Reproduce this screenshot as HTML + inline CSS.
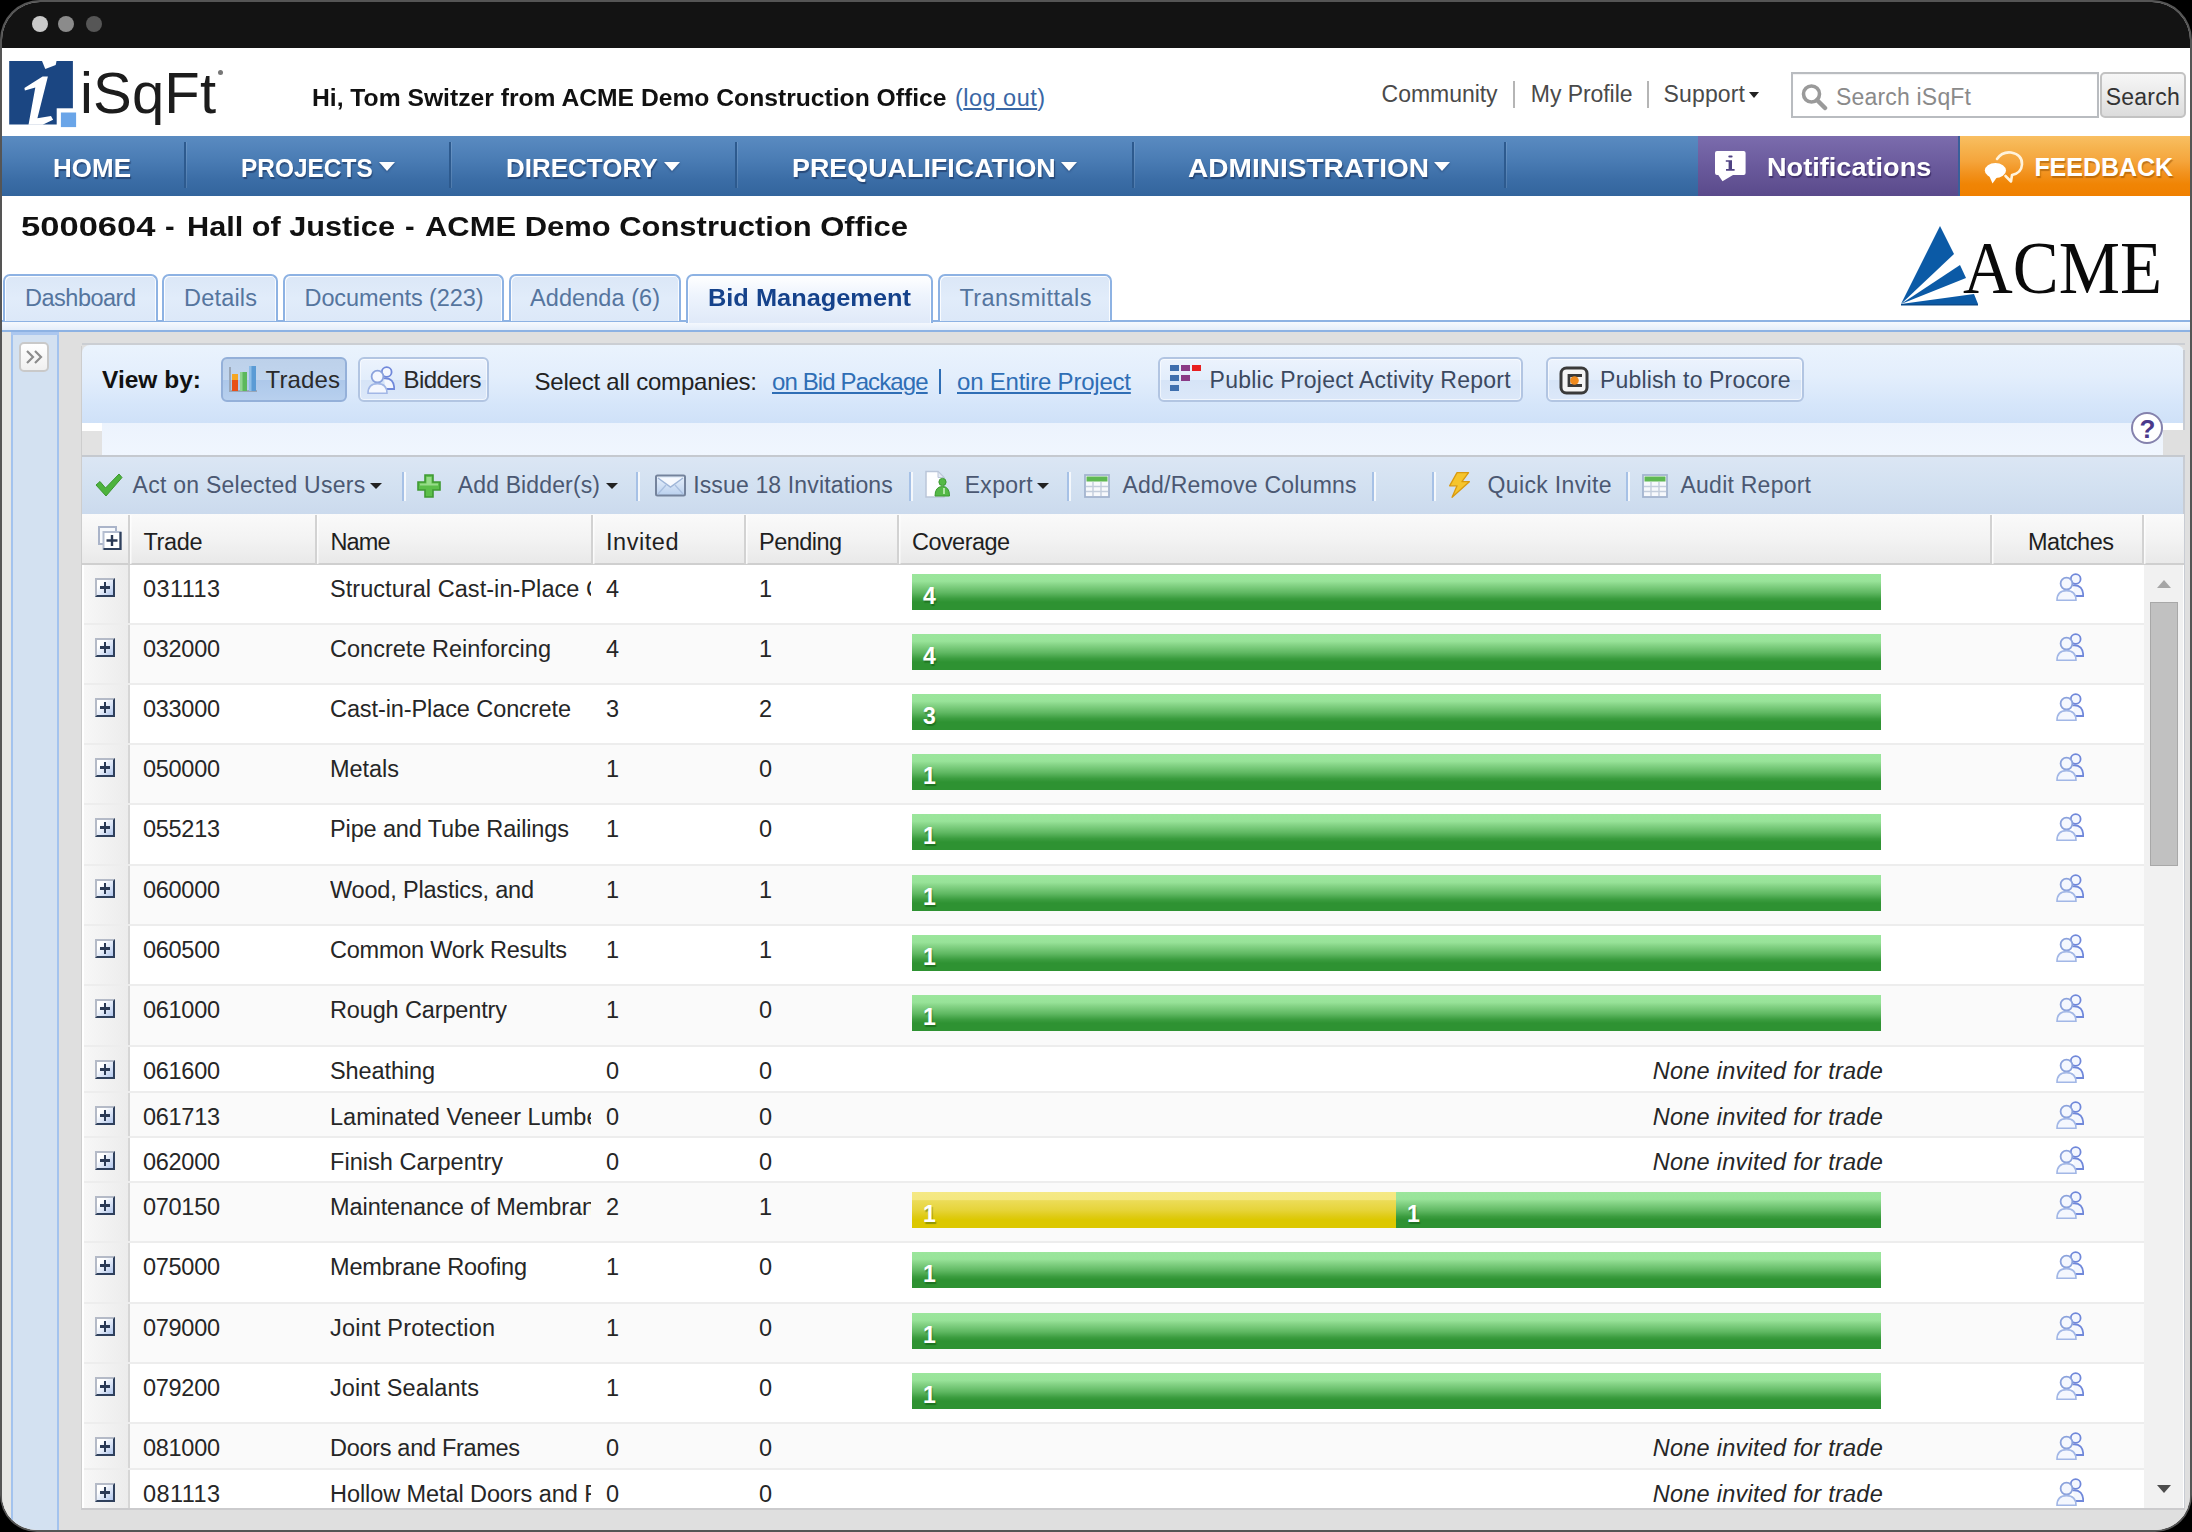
<!DOCTYPE html>
<html><head><meta charset="utf-8"><title>iSqFt - Bid Management</title>
<style>
*{box-sizing:border-box;margin:0;padding:0}
html,body{width:2192px;height:1532px;overflow:hidden;background:#000;font-family:"Liberation Sans",sans-serif}
#win{position:absolute;left:0;top:0;width:2192px;height:1532px;border-radius:40px 40px 37px 37px;background:#555;overflow:hidden}
#in{position:absolute;left:2px;top:2px;width:2188px;height:1528px;border-radius:38px 38px 35px 35px;background:#fff;overflow:hidden}
#pg{position:absolute;left:-2px;top:-2px;width:2192px;height:1532px}
.a{position:absolute}
.t{position:absolute;white-space:nowrap}
.dot{position:absolute;width:16px;height:16px;border-radius:50%;top:16px}
.nsep{position:absolute;top:142px;width:2px;height:46px;background:#2d5a8e;box-shadow:1px 0 0 rgba(255,255,255,.12)}
.tab{position:absolute;top:274px;height:47px;border:2px solid #8db2e3;border-bottom:none;border-radius:7px 7px 0 0;background:linear-gradient(#dbe7f7,#e1ecfa 50%,#dce8f8);box-shadow:inset 1px 1px 0 rgba(255,255,255,.85),inset -1px 0 0 rgba(255,255,255,.85)}
.tab.act{background:linear-gradient(#ffffff,#eef4fd 40%,#dfe9f8);height:49px}
.btn{position:absolute;top:357px;height:45px;border:2px solid #b2c5e2;border-radius:6px;background:linear-gradient(#ecf3fd,#e2edfb 50%,#d6e4f7 52%,#dce8f9);box-shadow:inset 0 0 0 1px rgba(255,255,255,.6)}
.btn.on{border-color:#94b0d9;background:linear-gradient(#bdd1ea,#c1d5ee 50%,#adc8ea 52%,#b8d0ee);box-shadow:none}
.tsep{position:absolute;top:472px;width:2px;height:29px;background:#a6c1e6;box-shadow:2px 0 0 rgba(255,255,255,.75)}
.hsep{position:absolute;top:515px;width:2px;height:49px;background:#d2d2d2;box-shadow:1.5px 0 0 rgba(255,255,255,.75)}
.row{position:absolute;left:84px;width:2060px;border-bottom:2px solid #ededed;background:#fff}
.row.alt{background:#fafafa}
.exp{position:absolute;left:0;top:0;bottom:0;width:46px;background:linear-gradient(90deg,#f7f7f7,#ececec);border-right:2px solid #d6d6d6}
.plus{position:absolute;left:11px;top:13px;width:20px;height:19px;border:2px solid;border-color:#b4bac7 #2f405c #2f405c #b4bac7;background:linear-gradient(135deg,#fff 25%,#b3c8ed)}
.plus:before{content:"";position:absolute;left:3px;top:6.3px;width:10px;height:2.4px;background:#2b3a55}
.plus:after{content:"";position:absolute;left:6.8px;top:2px;width:2.4px;height:11px;background:#2b3a55}
.bar{position:absolute;top:9px;height:36px;background:linear-gradient(#9be69c 0%,#98e399 20%,#86d487 30%,#5fb862 52%,#3c9d40 68%,#2e9232 78%,#2e9232 100%)}
.bar.y{background:linear-gradient(#f5e985 0%,#f4e77f 21%,#ecdc58 24%,#e6d43a 50%,#dfcb14 68%,#dcc800 78%,#dcc800 100%)}
.arr{position:absolute;width:0;height:0;border-left:6px solid transparent;border-right:6px solid transparent;border-top:6px solid #222}
</style></head><body>
<div id="win"><div id="in"><div id="pg">
<div class="a" style="left:0;top:0;width:2192px;height:48px;background:#131313"></div>
<div class="dot" style="left:32px;background:#c9c9c9"></div><div class="dot" style="left:58px;background:#8b8b8b"></div><div class="dot" style="left:86px;background:#565656"></div>
<svg class="a" style="left:8px;top:58px" width="72" height="72" viewBox="0 0 72 72">
<rect x="1.2" y="3" width="63.7" height="63.5" fill="#1b4682"/>
<path d="M33.6 2 L48.7 2 L47.7 7 L37.3 11.1 Z" fill="#fff"/>
<path d="M34.6 18.5 L39.9 18.5 L29.4 60.2 L43 58.1 L45.1 61.8 L34.6 66.8 L20.5 66.8 L27.3 29.4 L16.9 32.5 L16.4 30 Z" fill="#fff"/>
<rect x="48.7" y="50.3" width="21" height="20" fill="#fff"/>
<rect x="52.9" y="54.5" width="15.2" height="14.6" fill="#6aa5e8"/>
</svg>
<div class="a" style="left:218px;top:70px;width:5px;height:5px;border-radius:50%;background:#777"></div>
<div class="a" style="left:1513px;top:81px;width:2px;height:27px;background:#b5b5b5"></div>
<div class="a" style="left:1647px;top:81px;width:2px;height:27px;background:#b5b5b5"></div>
<div class="arr" style="left:1749px;top:92px;border-left-width:5.5px;border-right-width:5.5px;border-top-width:6px"></div>
<div class="a" style="left:1791px;top:72px;width:308px;height:46px;border:2px solid #b9bcc0;background:#fff;box-shadow:inset 0 1px 1px rgba(0,0,0,.06)"></div>
<svg class="a" style="left:1800px;top:83px" width="28" height="28" viewBox="0 0 28 28"><circle cx="11.5" cy="11" r="8" fill="none" stroke="#9a9a9a" stroke-width="3.6"/><path d="M17 17 L25 25" stroke="#9a9a9a" stroke-width="4.5" stroke-linecap="round"/></svg>
<div class="a" style="left:2100px;top:72px;width:86px;height:46px;border:2px solid #c2c2c2;border-radius:5px;background:linear-gradient(#f6f6f6,#eaeaea 50%,#dcdcdc)"></div>
<div class="a" style="left:0;top:136px;width:2192px;height:60px;background:linear-gradient(#5a8bc1 0%,#4a7cb4 40%,#3a6ca5 75%,#33659d 100%)"></div>
<div class="nsep" style="left:184px"></div>
<div class="nsep" style="left:449px"></div>
<div class="nsep" style="left:735px"></div>
<div class="nsep" style="left:1132px"></div>
<div class="nsep" style="left:1504px"></div>
<div class="arr" style="left:379px;top:162px;border-left-width:8.5px;border-right-width:8.5px;border-top:9px solid #fff;filter:drop-shadow(0 1px 1px rgba(20,40,80,.5))"></div>
<div class="arr" style="left:664px;top:162px;border-left-width:8.5px;border-right-width:8.5px;border-top:9px solid #fff;filter:drop-shadow(0 1px 1px rgba(20,40,80,.5))"></div>
<div class="arr" style="left:1060.5px;top:162px;border-left-width:8.5px;border-right-width:8.5px;border-top:9px solid #fff;filter:drop-shadow(0 1px 1px rgba(20,40,80,.5))"></div>
<div class="arr" style="left:1433.5px;top:162px;border-left-width:8.5px;border-right-width:8.5px;border-top:9px solid #fff;filter:drop-shadow(0 1px 1px rgba(20,40,80,.5))"></div>
<div class="a" style="left:1698px;top:136px;width:262px;height:60px;background:linear-gradient(#7b6cad,#6a5a9c 50%,#5a4a8b)"></div>
<svg class="a" style="left:1714px;top:149px" width="34" height="34" viewBox="0 0 34 34"><path d="M3 2 H29.6 Q31.6 2 31.6 4 V24 Q31.6 26 29.6 26 H19 L8.5 32.3 L4.3 26 H3 Q1 26 1 24 V4 Q1 2 3 2 Z" fill="#fff"/><rect x="14.3" y="6.4" width="4.3" height="2.2" rx="1" fill="#4f4283"/><path d="M11.8 11.3 H18 V19.9 H20.6 V21.7 H12 V19.9 H14.6 V12.8 H11.8 Z" fill="#4f4283"/></svg>
<div class="a" style="left:1960px;top:136px;width:232px;height:60px;background:linear-gradient(#f9bf62 0%,#f6b450 18%,#f5a53c 42%,#f2921e 62%,#f08505 80%,#f08000 100%)"></div>
<div class="a" style="left:1958px;top:136px;width:2px;height:60px;background:#3a5f9a"></div>
<svg class="a" style="left:1983px;top:149px" width="44" height="38" viewBox="0 0 44 38"><path d="M14 10 Q19 2.5 28 3.5 Q39.5 5.5 39 15.5 Q38.5 24 29 26 L28 32.5 L22.5 27" fill="none" stroke="#fff3dc" stroke-width="2.6" stroke-linejoin="round" stroke-linecap="round"/><ellipse cx="12.4" cy="21.5" rx="10.6" ry="7.6" fill="#fff"/><path d="M6 26.5 L9.5 34.5 L14.5 27.5 Z" fill="#fff"/></svg>
<svg class="a" style="left:1896px;top:222px" width="90" height="88" viewBox="0 0 90 88">
<path d="M5 82 L44 4 L58 32 Z" fill="#0b5aa6"/>
<path d="M5 82 L64 43 L70 56 Z" fill="#0b5aa6"/>
<path d="M5 82 L78 72 L82 82 L5 83 Z" fill="#0b5aa6"/>
<path d="M5 82 L82 82 L82 83.5 L5 83.5Z" fill="#0b4a8a"/>
</svg>
<div class="a" style="left:0;top:320px;width:2192px;height:2px;background:#8db2e3"></div>
<div class="a" style="left:0;top:322px;width:2192px;height:8px;background:linear-gradient(#f6f9fe,#e4edfa)"></div>
<div class="a" style="left:0;top:330px;width:2192px;height:2px;background:#8db2e3"></div>
<div class="tab" style="left:3px;width:155px"></div>
<div class="tab" style="left:162px;width:116px"></div>
<div class="tab" style="left:283px;width:221px"></div>
<div class="tab" style="left:509px;width:172px"></div>
<div class="tab act" style="left:686px;width:247px"></div>
<div class="tab" style="left:938px;width:174px"></div>
<div class="a" style="left:0;top:332px;width:2192px;height:1200px;background:#dfdfdf"></div>
<div class="a" style="left:11px;top:332px;width:48px;height:1200px;background:#d3e1f1;border-left:2px solid #a3c3ee;border-right:2px solid #a3c3ee"></div>
<div class="a" style="left:2px;top:332px;width:9px;height:1200px;background:#e6e6e4"></div>
<div class="a" style="left:11px;top:332px;width:48px;height:3px;background:#abc7ef"></div>
<div class="a" style="left:19px;top:342px;width:30px;height:30px;border:2px solid #c9c9c9;border-radius:5px;background:linear-gradient(#ffffff,#f0f0f0)"></div>
<svg class="a" style="left:24px;top:348px" width="22" height="18" viewBox="0 0 22 18"><path d="M3 3 L9 9 L3 15 M11 3 L17 9 L11 15" fill="none" stroke="#8c8c8c" stroke-width="2.2"/></svg>
<div class="a" style="left:82px;top:343px;width:2103px;height:2px;background:#cbced3"></div>
<div class="a" style="left:82px;top:345px;width:2102px;height:78px;border-radius:8px 8px 0 0;background:linear-gradient(#eaf3fd 0%,#e3eefc 40%,#d6e6fa 75%,#cfe1f8 100%)"></div>
<div class="a" style="left:82px;top:423px;width:2102px;height:33px;background:linear-gradient(#ecf3fd,#f0f6fe)"></div>
<div class="a" style="left:82px;top:423px;width:20px;height:8px;background:#fff"></div><div class="a" style="left:82px;top:431px;width:20px;height:25px;background:#e2e2e2"></div>
<div class="a" style="left:2163px;top:423px;width:21px;height:7px;background:#fff"></div><div class="a" style="left:2163px;top:430px;width:22px;height:26px;background:#dfdfdf"></div>
<div class="a" style="left:2183px;top:350px;width:2px;height:80px;background:#c8ccd3"></div>
<div class="btn on" style="left:221px;width:126px"></div>
<div class="btn" style="left:358px;width:131px"></div>
<svg class="a" style="left:228px;top:364px" width="30" height="30" viewBox="0 0 30 30"><rect x="1" y="3" width="2" height="25" fill="#9aa7b8"/><rect x="1" y="26" width="28" height="2" fill="#9aa7b8"/><rect x="4" y="15" width="6" height="12" fill="#e8501a"/><rect x="4" y="10" width="6" height="6" fill="#f5a623"/><rect x="12" y="8" width="7" height="19" fill="#5cb85c"/><rect x="21" y="2" width="7" height="25" fill="#5b9bd5"/><rect x="21" y="2" width="2.5" height="25" fill="#8cbde8"/><rect x="12" y="8" width="2.5" height="19" fill="#8fd48f"/></svg>
<svg class="a" style="left:367px;top:366px" width="28" height="28" viewBox="0 0 28 28"><g fill="#f4f7fe"><circle cx="19.7" cy="6" r="4.9" stroke="#7088da" stroke-width="1.8"/><path d="M17 12.3 Q27.2 11.5 27.2 23 H18.5" stroke="#7088da" stroke-width="1.8"/><circle cx="10.5" cy="10.6" r="5.9" stroke="#8ba2dc" stroke-width="1.8"/><path d="M1 27.4 Q1 17.6 10.5 17.6 Q20 17.6 20 27.4 Z" stroke="#a2b7e6" stroke-width="1.6"/></g></svg>
<div class="a" style="left:939px;top:369px;width:2px;height:25px;background:#2f6eb5"></div>
<div class="btn" style="left:1158px;width:365px"></div>
<svg class="a" style="left:1170px;top:364px" width="32" height="30" viewBox="0 0 32 30"><rect x="0" y="1" width="9" height="6" fill="#3f6fae"/><rect x="11" y="1" width="9" height="6" fill="#8a3a86"/><rect x="22" y="1" width="9" height="6" fill="#e82020"/><rect x="0" y="11" width="9" height="6" fill="#3f6fae"/><rect x="11" y="11" width="9" height="6" fill="#8a3a86"/><rect x="0" y="21" width="9" height="6" fill="#3f6fae"/></svg>
<div class="btn" style="left:1546px;width:258px"></div>
<svg class="a" style="left:1559px;top:366px" width="30" height="30" viewBox="0 0 30 30"><rect x="2" y="2" width="26" height="25" rx="5.5" fill="#f4f4f4" stroke="#3a3a3a" stroke-width="3"/><path d="M23 9.5 H10 V19.5 H23" fill="none" stroke="#3a3a3a" stroke-width="2.8"/><circle cx="15.5" cy="14.5" r="4.3" fill="#f08a1c"/></svg>
<div class="a" style="left:2131px;top:412px;width:32px;height:32px;border-radius:50%;border:2px solid #8582ad;background:#fff"></div>
<div class="a" style="left:82px;top:455px;width:2103px;height:2px;background:#c5c9cf"></div>
<div class="a" style="left:82px;top:457px;width:2102px;height:57px;background:linear-gradient(#dbe6f4 0%,#d3e1f1 50%,#cbdaed 100%)"></div>
<div class="a" style="left:2183px;top:457px;width:2px;height:1052px;background:#c8ccd3"></div>
<svg class="a" style="left:94px;top:472px" width="30" height="26" viewBox="0 0 30 26"><path d="M2 13 L6 9.5 L11.5 16 L25 2 L28 5.5 L12 24 Z" fill="#4db33d" stroke="#3c962f" stroke-width="1"/></svg>
<div class="arr" style="left:370px;top:483px"></div>
<div class="tsep" style="left:402px"></div>
<svg class="a" style="left:417px;top:474px" width="24" height="24" viewBox="0 0 24 24"><path d="M8 1 H16 V8 H23 V16 H16 V23 H8 V16 H1 V8 H8 Z" fill="#5cbf4a" stroke="#3f9a33" stroke-width="1.6"/><path d="M9.5 3 H14.5 V9.5 H21 V11.5 H3 V9.5 H9.5Z" fill="#a6e39a" opacity=".8"/></svg>
<div class="arr" style="left:606px;top:483px"></div>
<div class="tsep" style="left:636px"></div>
<svg class="a" style="left:655px;top:474px" width="32" height="24" viewBox="0 0 32 24"><defs><linearGradient id="mg" x1="0" y1="0" x2="0" y2="1"><stop offset="0" stop-color="#eaf2fc"/><stop offset="1" stop-color="#b9d0ee"/></linearGradient></defs><rect x="1" y="1.5" width="29" height="20" rx="1.5" fill="url(#mg)" stroke="#74839c" stroke-width="2"/><path d="M3 4 L15.5 13 L28 4" fill="#f6f9fe" stroke="#9fb6d8" stroke-width="1.5"/><path d="M3 20 L11 11 M28 20 L20 11" fill="none" stroke="#a9bfdf" stroke-width="1.3"/></svg>
<div class="tsep" style="left:909px"></div>
<svg class="a" style="left:923px;top:469px" width="30" height="30" viewBox="0 0 30 30"><path d="M3 2.5 H15 L21 8.5 V28 H3 Z" fill="#fdfeff" stroke="#bac6d9" stroke-width="1.5"/><path d="M15 2.5 V8.5 H21 Z" fill="#e3e9f3" stroke="#bac6d9" stroke-width="1"/><circle cx="19.5" cy="13" r="3.6" fill="#55b947" stroke="#3a9a30" stroke-width="1"/><path d="M12 27 Q12 17.5 19.5 17.5 Q26.5 17.5 26.5 27 Z" fill="#55b947" stroke="#3a9a30" stroke-width="1"/><path d="M21 19 v6" stroke="#c8f0c0" stroke-width="1.6"/></svg>
<div class="arr" style="left:1037px;top:483px"></div>
<div class="tsep" style="left:1067px"></div>
<svg class="a" style="left:1084px;top:474px" width="26" height="24" viewBox="0 0 26 24"><rect x="1" y="1" width="24" height="22" fill="#f7f9fc" stroke="#a3b4cf" stroke-width="1.8"/><rect x="2.5" y="2.5" width="21" height="5" fill="#5fb852"/><path d="M2 12.5 H24 M2 17.5 H24 M9 8 V22 M17 8 V22" stroke="#c3cddc" stroke-width="1.4"/></svg>
<div class="tsep" style="left:1372px"></div>
<div class="tsep" style="left:1432px"></div>
<svg class="a" style="left:1447px;top:471px" width="25" height="28" viewBox="0 0 30 34"><path d="M12 2 L26 2 L18 13 L27 13 L6 32 L12 18 L3 18 Z" fill="#f6c52c" stroke="#d99a10" stroke-width="1.6" stroke-linejoin="round"/></svg>
<div class="tsep" style="left:1626px"></div>
<svg class="a" style="left:1642px;top:474px" width="26" height="24" viewBox="0 0 26 24"><rect x="1" y="1" width="24" height="22" fill="#f7f9fc" stroke="#a3b4cf" stroke-width="1.8"/><rect x="2.5" y="2.5" width="21" height="5" fill="#5fb852"/><path d="M2 12.5 H24 M2 17.5 H24 M9 8 V22 M17 8 V22" stroke="#c3cddc" stroke-width="1.4"/></svg>
<div class="a" style="left:80.5px;top:346px;width:1.5px;height:1163px;background:#cdcdcd"></div>
<div class="a" style="left:82px;top:514px;width:2102px;height:51px;background:linear-gradient(#fafafa 0%,#f3f3f3 50%,#e9e9e9 100%);border-bottom:2px solid #cfcfcf"></div>
<div class="hsep" style="left:128px"></div>
<div class="hsep" style="left:315px"></div>
<div class="hsep" style="left:591px"></div>
<div class="hsep" style="left:744px"></div>
<div class="hsep" style="left:897px"></div>
<div class="hsep" style="left:1990px"></div>
<div class="hsep" style="left:2142px"></div>
<svg class="a" style="left:97px;top:525px" width="26" height="26" viewBox="0 0 26 26"><rect x="2" y="2" width="17" height="17" fill="#f7f9fc" stroke="#aab4c9" stroke-width="2"/><rect x="6.5" y="7" width="17" height="17" fill="#fff"/><rect x="6.5" y="7" width="17" height="17" fill="none" stroke="#b4bdd0" stroke-width="2"/><path d="M23.5 7 V24 H6.5" fill="none" stroke="#2f405c" stroke-width="2.2"/><path d="M9.5 15.5 H20.5 M15 10 V21" stroke="#2b3a55" stroke-width="2.4"/></svg>
<div class="a" style="left:82px;top:565px;width:2102px;height:944px;background:#fff"></div>
<div class="a" style="left:0;top:565px;width:2192px;height:944px;overflow:hidden">
<div class="row" style="top:0px;height:60px"><div class="exp"><div class="plus"></div></div><div class="bar" style="left:828px;width:969px"></div><svg class="a" style="left:1972px;top:8px" width="28" height="28" viewBox="0 0 28 28"><g fill="#f4f7fe"><circle cx="19.7" cy="6" r="4.9" stroke="#7088da" stroke-width="1.8"/><path d="M17 12.3 Q27.2 11.5 27.2 23 H18.5" stroke="#7088da" stroke-width="1.8"/><circle cx="10.5" cy="10.6" r="5.9" stroke="#8ba2dc" stroke-width="1.8"/><path d="M1 27.4 Q1 17.6 10.5 17.6 Q20 17.6 20 27.4 Z" stroke="#a2b7e6" stroke-width="1.6"/></g></svg></div>
<div class="row alt" style="top:60px;height:60px"><div class="exp"><div class="plus"></div></div><div class="bar" style="left:828px;width:969px"></div><svg class="a" style="left:1972px;top:8px" width="28" height="28" viewBox="0 0 28 28"><g fill="#f4f7fe"><circle cx="19.7" cy="6" r="4.9" stroke="#7088da" stroke-width="1.8"/><path d="M17 12.3 Q27.2 11.5 27.2 23 H18.5" stroke="#7088da" stroke-width="1.8"/><circle cx="10.5" cy="10.6" r="5.9" stroke="#8ba2dc" stroke-width="1.8"/><path d="M1 27.4 Q1 17.6 10.5 17.6 Q20 17.6 20 27.4 Z" stroke="#a2b7e6" stroke-width="1.6"/></g></svg></div>
<div class="row" style="top:120px;height:60px"><div class="exp"><div class="plus"></div></div><div class="bar" style="left:828px;width:969px"></div><svg class="a" style="left:1972px;top:8px" width="28" height="28" viewBox="0 0 28 28"><g fill="#f4f7fe"><circle cx="19.7" cy="6" r="4.9" stroke="#7088da" stroke-width="1.8"/><path d="M17 12.3 Q27.2 11.5 27.2 23 H18.5" stroke="#7088da" stroke-width="1.8"/><circle cx="10.5" cy="10.6" r="5.9" stroke="#8ba2dc" stroke-width="1.8"/><path d="M1 27.4 Q1 17.6 10.5 17.6 Q20 17.6 20 27.4 Z" stroke="#a2b7e6" stroke-width="1.6"/></g></svg></div>
<div class="row alt" style="top:180px;height:60px"><div class="exp"><div class="plus"></div></div><div class="bar" style="left:828px;width:969px"></div><svg class="a" style="left:1972px;top:8px" width="28" height="28" viewBox="0 0 28 28"><g fill="#f4f7fe"><circle cx="19.7" cy="6" r="4.9" stroke="#7088da" stroke-width="1.8"/><path d="M17 12.3 Q27.2 11.5 27.2 23 H18.5" stroke="#7088da" stroke-width="1.8"/><circle cx="10.5" cy="10.6" r="5.9" stroke="#8ba2dc" stroke-width="1.8"/><path d="M1 27.4 Q1 17.6 10.5 17.6 Q20 17.6 20 27.4 Z" stroke="#a2b7e6" stroke-width="1.6"/></g></svg></div>
<div class="row" style="top:240px;height:61px"><div class="exp"><div class="plus"></div></div><div class="bar" style="left:828px;width:969px"></div><svg class="a" style="left:1972px;top:8px" width="28" height="28" viewBox="0 0 28 28"><g fill="#f4f7fe"><circle cx="19.7" cy="6" r="4.9" stroke="#7088da" stroke-width="1.8"/><path d="M17 12.3 Q27.2 11.5 27.2 23 H18.5" stroke="#7088da" stroke-width="1.8"/><circle cx="10.5" cy="10.6" r="5.9" stroke="#8ba2dc" stroke-width="1.8"/><path d="M1 27.4 Q1 17.6 10.5 17.6 Q20 17.6 20 27.4 Z" stroke="#a2b7e6" stroke-width="1.6"/></g></svg></div>
<div class="row alt" style="top:301px;height:60px"><div class="exp"><div class="plus"></div></div><div class="bar" style="left:828px;width:969px"></div><svg class="a" style="left:1972px;top:8px" width="28" height="28" viewBox="0 0 28 28"><g fill="#f4f7fe"><circle cx="19.7" cy="6" r="4.9" stroke="#7088da" stroke-width="1.8"/><path d="M17 12.3 Q27.2 11.5 27.2 23 H18.5" stroke="#7088da" stroke-width="1.8"/><circle cx="10.5" cy="10.6" r="5.9" stroke="#8ba2dc" stroke-width="1.8"/><path d="M1 27.4 Q1 17.6 10.5 17.6 Q20 17.6 20 27.4 Z" stroke="#a2b7e6" stroke-width="1.6"/></g></svg></div>
<div class="row" style="top:361px;height:60px"><div class="exp"><div class="plus"></div></div><div class="bar" style="left:828px;width:969px"></div><svg class="a" style="left:1972px;top:8px" width="28" height="28" viewBox="0 0 28 28"><g fill="#f4f7fe"><circle cx="19.7" cy="6" r="4.9" stroke="#7088da" stroke-width="1.8"/><path d="M17 12.3 Q27.2 11.5 27.2 23 H18.5" stroke="#7088da" stroke-width="1.8"/><circle cx="10.5" cy="10.6" r="5.9" stroke="#8ba2dc" stroke-width="1.8"/><path d="M1 27.4 Q1 17.6 10.5 17.6 Q20 17.6 20 27.4 Z" stroke="#a2b7e6" stroke-width="1.6"/></g></svg></div>
<div class="row alt" style="top:421px;height:61px"><div class="exp"><div class="plus"></div></div><div class="bar" style="left:828px;width:969px"></div><svg class="a" style="left:1972px;top:8px" width="28" height="28" viewBox="0 0 28 28"><g fill="#f4f7fe"><circle cx="19.7" cy="6" r="4.9" stroke="#7088da" stroke-width="1.8"/><path d="M17 12.3 Q27.2 11.5 27.2 23 H18.5" stroke="#7088da" stroke-width="1.8"/><circle cx="10.5" cy="10.6" r="5.9" stroke="#8ba2dc" stroke-width="1.8"/><path d="M1 27.4 Q1 17.6 10.5 17.6 Q20 17.6 20 27.4 Z" stroke="#a2b7e6" stroke-width="1.6"/></g></svg></div>
<div class="row" style="top:482px;height:46px"><div class="exp"><div class="plus"></div></div><svg class="a" style="left:1972px;top:8px" width="28" height="28" viewBox="0 0 28 28"><g fill="#f4f7fe"><circle cx="19.7" cy="6" r="4.9" stroke="#7088da" stroke-width="1.8"/><path d="M17 12.3 Q27.2 11.5 27.2 23 H18.5" stroke="#7088da" stroke-width="1.8"/><circle cx="10.5" cy="10.6" r="5.9" stroke="#8ba2dc" stroke-width="1.8"/><path d="M1 27.4 Q1 17.6 10.5 17.6 Q20 17.6 20 27.4 Z" stroke="#a2b7e6" stroke-width="1.6"/></g></svg></div>
<div class="row alt" style="top:528px;height:45px"><div class="exp"><div class="plus"></div></div><svg class="a" style="left:1972px;top:8px" width="28" height="28" viewBox="0 0 28 28"><g fill="#f4f7fe"><circle cx="19.7" cy="6" r="4.9" stroke="#7088da" stroke-width="1.8"/><path d="M17 12.3 Q27.2 11.5 27.2 23 H18.5" stroke="#7088da" stroke-width="1.8"/><circle cx="10.5" cy="10.6" r="5.9" stroke="#8ba2dc" stroke-width="1.8"/><path d="M1 27.4 Q1 17.6 10.5 17.6 Q20 17.6 20 27.4 Z" stroke="#a2b7e6" stroke-width="1.6"/></g></svg></div>
<div class="row" style="top:573px;height:45px"><div class="exp"><div class="plus"></div></div><svg class="a" style="left:1972px;top:8px" width="28" height="28" viewBox="0 0 28 28"><g fill="#f4f7fe"><circle cx="19.7" cy="6" r="4.9" stroke="#7088da" stroke-width="1.8"/><path d="M17 12.3 Q27.2 11.5 27.2 23 H18.5" stroke="#7088da" stroke-width="1.8"/><circle cx="10.5" cy="10.6" r="5.9" stroke="#8ba2dc" stroke-width="1.8"/><path d="M1 27.4 Q1 17.6 10.5 17.6 Q20 17.6 20 27.4 Z" stroke="#a2b7e6" stroke-width="1.6"/></g></svg></div>
<div class="row alt" style="top:618px;height:60px"><div class="exp"><div class="plus"></div></div><div class="bar y" style="left:828px;width:484px"></div><div class="bar" style="left:1312px;width:485px"></div><svg class="a" style="left:1972px;top:8px" width="28" height="28" viewBox="0 0 28 28"><g fill="#f4f7fe"><circle cx="19.7" cy="6" r="4.9" stroke="#7088da" stroke-width="1.8"/><path d="M17 12.3 Q27.2 11.5 27.2 23 H18.5" stroke="#7088da" stroke-width="1.8"/><circle cx="10.5" cy="10.6" r="5.9" stroke="#8ba2dc" stroke-width="1.8"/><path d="M1 27.4 Q1 17.6 10.5 17.6 Q20 17.6 20 27.4 Z" stroke="#a2b7e6" stroke-width="1.6"/></g></svg></div>
<div class="row" style="top:678px;height:61px"><div class="exp"><div class="plus"></div></div><div class="bar" style="left:828px;width:969px"></div><svg class="a" style="left:1972px;top:8px" width="28" height="28" viewBox="0 0 28 28"><g fill="#f4f7fe"><circle cx="19.7" cy="6" r="4.9" stroke="#7088da" stroke-width="1.8"/><path d="M17 12.3 Q27.2 11.5 27.2 23 H18.5" stroke="#7088da" stroke-width="1.8"/><circle cx="10.5" cy="10.6" r="5.9" stroke="#8ba2dc" stroke-width="1.8"/><path d="M1 27.4 Q1 17.6 10.5 17.6 Q20 17.6 20 27.4 Z" stroke="#a2b7e6" stroke-width="1.6"/></g></svg></div>
<div class="row alt" style="top:739px;height:60px"><div class="exp"><div class="plus"></div></div><div class="bar" style="left:828px;width:969px"></div><svg class="a" style="left:1972px;top:8px" width="28" height="28" viewBox="0 0 28 28"><g fill="#f4f7fe"><circle cx="19.7" cy="6" r="4.9" stroke="#7088da" stroke-width="1.8"/><path d="M17 12.3 Q27.2 11.5 27.2 23 H18.5" stroke="#7088da" stroke-width="1.8"/><circle cx="10.5" cy="10.6" r="5.9" stroke="#8ba2dc" stroke-width="1.8"/><path d="M1 27.4 Q1 17.6 10.5 17.6 Q20 17.6 20 27.4 Z" stroke="#a2b7e6" stroke-width="1.6"/></g></svg></div>
<div class="row" style="top:799px;height:60px"><div class="exp"><div class="plus"></div></div><div class="bar" style="left:828px;width:969px"></div><svg class="a" style="left:1972px;top:8px" width="28" height="28" viewBox="0 0 28 28"><g fill="#f4f7fe"><circle cx="19.7" cy="6" r="4.9" stroke="#7088da" stroke-width="1.8"/><path d="M17 12.3 Q27.2 11.5 27.2 23 H18.5" stroke="#7088da" stroke-width="1.8"/><circle cx="10.5" cy="10.6" r="5.9" stroke="#8ba2dc" stroke-width="1.8"/><path d="M1 27.4 Q1 17.6 10.5 17.6 Q20 17.6 20 27.4 Z" stroke="#a2b7e6" stroke-width="1.6"/></g></svg></div>
<div class="row alt" style="top:859px;height:46px"><div class="exp"><div class="plus"></div></div><svg class="a" style="left:1972px;top:8px" width="28" height="28" viewBox="0 0 28 28"><g fill="#f4f7fe"><circle cx="19.7" cy="6" r="4.9" stroke="#7088da" stroke-width="1.8"/><path d="M17 12.3 Q27.2 11.5 27.2 23 H18.5" stroke="#7088da" stroke-width="1.8"/><circle cx="10.5" cy="10.6" r="5.9" stroke="#8ba2dc" stroke-width="1.8"/><path d="M1 27.4 Q1 17.6 10.5 17.6 Q20 17.6 20 27.4 Z" stroke="#a2b7e6" stroke-width="1.6"/></g></svg></div>
<div class="row" style="top:905px;height:45px"><div class="exp"><div class="plus"></div></div><svg class="a" style="left:1972px;top:8px" width="28" height="28" viewBox="0 0 28 28"><g fill="#f4f7fe"><circle cx="19.7" cy="6" r="4.9" stroke="#7088da" stroke-width="1.8"/><path d="M17 12.3 Q27.2 11.5 27.2 23 H18.5" stroke="#7088da" stroke-width="1.8"/><circle cx="10.5" cy="10.6" r="5.9" stroke="#8ba2dc" stroke-width="1.8"/><path d="M1 27.4 Q1 17.6 10.5 17.6 Q20 17.6 20 27.4 Z" stroke="#a2b7e6" stroke-width="1.6"/></g></svg></div>
</div>
<div class="a" style="left:2144px;top:565px;width:39px;height:944px;background:#f1f1f1"></div>
<div class="a" style="left:2150px;top:602px;width:28px;height:264px;background:#c1c1c1;border:1px solid #a8a8a8"></div>
<div class="a" style="left:2156.5px;top:580px;width:0;height:0;border-left:7.5px solid transparent;border-right:7.5px solid transparent;border-bottom:8.5px solid #a6a6a6"></div>
<div class="a" style="left:2157px;top:1485px;width:0;height:0;border-left:7.5px solid transparent;border-right:7.5px solid transparent;border-top:8.5px solid #4c4c4c"></div>
<div class="a" style="left:81px;top:1508px;width:2104px;height:2px;background:#cbcbcd"></div>
<div class="a" style="left:59px;top:1510px;width:2133px;height:22px;background:#dfdfdf"></div>
<span class="t" style="left:80px;top:64px;font-size:58px;line-height:58px;color:#1c1c1c;letter-spacing:0.156px;">iSqFt</span>
<span class="t" style="left:312px;top:87px;font-size:23.5px;line-height:23.5px;color:#111;font-weight:bold;transform:scaleX(1.0496);transform-origin:left center;">Hi, Tom Switzer from ACME Demo Construction Office</span>
<span class="t" style="left:955px;top:87px;font-size:23.5px;line-height:23.5px;color:#3a67a5;letter-spacing:0.473px;">(<span style="text-decoration:underline;color:#3a67a5">log out</span>)</span>
<span class="t" style="left:1381.6px;top:83px;font-size:23px;line-height:23px;color:#4a4a4a;letter-spacing:-0.039px;">Community</span>
<span class="t" style="left:1530.8px;top:83px;font-size:23px;line-height:23px;color:#4a4a4a;letter-spacing:-0.061px;">My Profile</span>
<span class="t" style="left:1663.6px;top:83px;font-size:23px;line-height:23px;color:#4a4a4a;letter-spacing:0.140px;">Support</span>
<span class="t" style="left:1836px;top:86px;font-size:23px;line-height:23px;color:#8a8a8a;letter-spacing:0.186px;">Search iSqFt</span>
<span class="t" style="left:2105.7px;top:86px;font-size:23px;line-height:23px;color:#333;letter-spacing:0.225px;">Search</span>
<span class="t" style="left:53px;top:155px;font-size:26.5px;line-height:26.5px;color:#fff;font-weight:bold;transform:scaleX(0.9811);transform-origin:left center;text-shadow:1px 2px 1px rgba(20,40,80,.55);">HOME</span>
<span class="t" style="left:241px;top:155px;font-size:26.5px;line-height:26.5px;color:#fff;font-weight:bold;transform:scaleX(0.9220);transform-origin:left center;text-shadow:1px 2px 1px rgba(20,40,80,.55);">PROJECTS</span>
<span class="t" style="left:506.2px;top:155px;font-size:26.5px;line-height:26.5px;color:#fff;font-weight:bold;transform:scaleX(0.9805);transform-origin:left center;text-shadow:1px 2px 1px rgba(20,40,80,.55);">DIRECTORY</span>
<span class="t" style="left:791.8px;top:155px;font-size:26.5px;line-height:26.5px;color:#fff;font-weight:bold;transform:scaleX(1.0142);transform-origin:left center;text-shadow:1px 2px 1px rgba(20,40,80,.55);">PREQUALIFICATION</span>
<span class="t" style="left:1188px;top:155px;font-size:26.5px;line-height:26.5px;color:#fff;font-weight:bold;transform:scaleX(1.0585);transform-origin:left center;text-shadow:1px 2px 1px rgba(20,40,80,.55);">ADMINISTRATION</span>
<span class="t" style="left:1766.6px;top:154px;font-size:26.5px;line-height:26.5px;color:#fff;font-weight:bold;transform:scaleX(1.0238);transform-origin:left center;text-shadow:1px 2px 1px rgba(40,25,80,.6);">Notifications</span>
<span class="t" style="left:2034.4px;top:155px;font-size:25px;line-height:25px;color:#fff;font-weight:bold;letter-spacing:-0.044px;text-shadow:1px 2px 1px rgba(150,80,0,.55);">FEEDBACK</span>
<span class="t" style="left:21px;top:213px;font-size:28px;line-height:28px;color:#111;font-weight:bold;transform:scaleX(1.2338);transform-origin:left center;">5000604</span>
<span class="t" style="left:165.2px;top:213px;font-size:28px;line-height:28px;color:#111;font-weight:bold;transform:scaleX(1.0291);transform-origin:left center;">-</span>
<span class="t" style="left:186.7px;top:213px;font-size:28px;line-height:28px;color:#111;font-weight:bold;transform:scaleX(1.0956);transform-origin:left center;">Hall of Justice</span>
<span class="t" style="left:404.5px;top:213px;font-size:28px;line-height:28px;color:#111;font-weight:bold;transform:scaleX(1.0291);transform-origin:left center;">-</span>
<span class="t" style="left:425.3px;top:213px;font-size:28px;line-height:28px;color:#111;font-weight:bold;transform:scaleX(1.1049);transform-origin:left center;">ACME Demo Construction Office</span>
<span class="t" style="left:1963px;top:232px;font-size:73px;line-height:73px;color:#0a0a0a;font-family:'Liberation Serif', serif;transform:scaleX(0.9435);transform-origin:left center;">ACME</span>
<span class="t" style="left:25px;top:287px;font-size:23.5px;line-height:23.5px;color:#55759e;letter-spacing:-0.496px;">Dashboard</span>
<span class="t" style="left:184px;top:287px;font-size:23.5px;line-height:23.5px;color:#55759e;letter-spacing:0.193px;">Details</span>
<span class="t" style="left:304.5px;top:287px;font-size:23.5px;line-height:23.5px;color:#55759e;letter-spacing:-0.089px;">Documents (223)</span>
<span class="t" style="left:530px;top:287px;font-size:23.5px;line-height:23.5px;color:#55759e;letter-spacing:0.066px;">Addenda (6)</span>
<span class="t" style="left:707.5px;top:286px;font-size:24px;line-height:24px;color:#15428b;font-weight:bold;transform:scaleX(1.0571);transform-origin:left center;">Bid Management</span>
<span class="t" style="left:959.4px;top:287px;font-size:23.5px;line-height:23.5px;color:#55759e;letter-spacing:0.446px;">Transmittals</span>
<span class="t" style="left:102px;top:368px;font-size:24.5px;line-height:24.5px;color:#111;font-weight:bold;">View by:</span>
<span class="t" style="left:265.5px;top:368px;font-size:24px;line-height:24px;color:#2a2a2a;letter-spacing:0.138px;">Trades</span>
<span class="t" style="left:403.5px;top:368px;font-size:24px;line-height:24px;color:#2a2a2a;letter-spacing:-0.562px;">Bidders</span>
<span class="t" style="left:534.5px;top:370px;font-size:24px;line-height:24px;color:#222;letter-spacing:-0.214px;">Select all companies:</span>
<span class="t" style="left:772px;top:370px;font-size:24px;line-height:24px;color:#2f6eb5;letter-spacing:-0.887px;text-decoration:underline;">on Bid Package</span>
<span class="t" style="left:957px;top:370px;font-size:24px;line-height:24px;color:#2f6eb5;letter-spacing:-0.214px;text-decoration:underline;">on Entire Project</span>
<span class="t" style="left:1209.6px;top:369px;font-size:23px;line-height:23px;color:#3c4960;letter-spacing:0.241px;">Public Project Activity Report</span>
<span class="t" style="left:1600px;top:369px;font-size:23px;line-height:23px;color:#3c4960;letter-spacing:0.157px;">Publish to Procore</span>
<span class="t" style="left:2139.5px;top:416px;font-size:26px;line-height:26px;color:#4a3a8c;font-weight:bold;">?</span>
<span class="t" style="left:132.6px;top:474px;font-size:23px;line-height:23px;color:#4b5872;letter-spacing:0.252px;">Act on Selected Users</span>
<span class="t" style="left:457.8px;top:474px;font-size:23px;line-height:23px;color:#4b5872;letter-spacing:0.131px;">Add Bidder(s)</span>
<span class="t" style="left:693.2px;top:474px;font-size:23px;line-height:23px;color:#4b5872;letter-spacing:0.142px;">Issue 18 Invitations</span>
<span class="t" style="left:964.7px;top:474px;font-size:23px;line-height:23px;color:#4b5872;letter-spacing:0.303px;">Export</span>
<span class="t" style="left:1122.4px;top:474px;font-size:23px;line-height:23px;color:#4b5872;letter-spacing:0.241px;">Add/Remove Columns</span>
<span class="t" style="left:1487.6px;top:474px;font-size:23px;line-height:23px;color:#4b5872;letter-spacing:0.349px;">Quick Invite</span>
<span class="t" style="left:1680.5px;top:474px;font-size:23px;line-height:23px;color:#4b5872;letter-spacing:0.240px;">Audit Report</span>
<span class="t" style="left:143.5px;top:531px;font-size:23.5px;line-height:23.5px;color:#1f1f1f;letter-spacing:-0.383px;">Trade</span>
<span class="t" style="left:330.5px;top:531px;font-size:23.5px;line-height:23.5px;color:#1f1f1f;letter-spacing:-0.896px;">Name</span>
<span class="t" style="left:606px;top:531px;font-size:23.5px;line-height:23.5px;color:#1f1f1f;letter-spacing:0.542px;">Invited</span>
<span class="t" style="left:759px;top:531px;font-size:23.5px;line-height:23.5px;color:#1f1f1f;letter-spacing:-0.542px;">Pending</span>
<span class="t" style="left:912px;top:531px;font-size:23.5px;line-height:23.5px;color:#1f1f1f;letter-spacing:-0.558px;">Coverage</span>
<span class="t" style="left:2028px;top:531px;font-size:23.5px;line-height:23.5px;color:#1f1f1f;letter-spacing:-0.471px;">Matches</span>
<span class="t" style="left:143px;top:578px;font-size:23.5px;line-height:23.5px;color:#262626;letter-spacing:0.412px;">031113</span>
<span class="t" style="left:330px;top:578px;font-size:23.5px;line-height:23.5px;color:#262626;letter-spacing:0.054px;max-width:261px;overflow:hidden;">Structural Cast-in-Place C</span>
<span class="t" style="left:606px;top:578px;font-size:23.5px;line-height:23.5px;color:#262626;">4</span>
<span class="t" style="left:759px;top:578px;font-size:23.5px;line-height:23.5px;color:#262626;">1</span>
<span class="t" style="left:923px;top:585px;font-size:23px;line-height:23px;color:#fff;font-weight:bold;text-shadow:1px 2px 1px rgba(0,60,0,.35);">4</span>
<span class="t" style="left:143px;top:638px;font-size:23.5px;line-height:23.5px;color:#262626;letter-spacing:-0.284px;">032000</span>
<span class="t" style="left:330px;top:638px;font-size:23.5px;line-height:23.5px;color:#262626;letter-spacing:0.013px;max-width:261px;overflow:hidden;">Concrete Reinforcing</span>
<span class="t" style="left:606px;top:638px;font-size:23.5px;line-height:23.5px;color:#262626;">4</span>
<span class="t" style="left:759px;top:638px;font-size:23.5px;line-height:23.5px;color:#262626;">1</span>
<span class="t" style="left:923px;top:645px;font-size:23px;line-height:23px;color:#fff;font-weight:bold;text-shadow:1px 2px 1px rgba(0,60,0,.35);">4</span>
<span class="t" style="left:143px;top:698px;font-size:23.5px;line-height:23.5px;color:#262626;letter-spacing:-0.284px;">033000</span>
<span class="t" style="left:330px;top:698px;font-size:23.5px;line-height:23.5px;color:#262626;letter-spacing:-0.092px;max-width:261px;overflow:hidden;">Cast-in-Place Concrete</span>
<span class="t" style="left:606px;top:698px;font-size:23.5px;line-height:23.5px;color:#262626;">3</span>
<span class="t" style="left:759px;top:698px;font-size:23.5px;line-height:23.5px;color:#262626;">2</span>
<span class="t" style="left:923px;top:705px;font-size:23px;line-height:23px;color:#fff;font-weight:bold;text-shadow:1px 2px 1px rgba(0,60,0,.35);">3</span>
<span class="t" style="left:143px;top:758px;font-size:23.5px;line-height:23.5px;color:#262626;letter-spacing:-0.284px;">050000</span>
<span class="t" style="left:330px;top:758px;font-size:23.5px;line-height:23.5px;color:#262626;letter-spacing:-0.044px;max-width:261px;overflow:hidden;">Metals</span>
<span class="t" style="left:606px;top:758px;font-size:23.5px;line-height:23.5px;color:#262626;">1</span>
<span class="t" style="left:759px;top:758px;font-size:23.5px;line-height:23.5px;color:#262626;">0</span>
<span class="t" style="left:923px;top:765px;font-size:23px;line-height:23px;color:#fff;font-weight:bold;text-shadow:1px 2px 1px rgba(0,60,0,.35);">1</span>
<span class="t" style="left:143px;top:818px;font-size:23.5px;line-height:23.5px;color:#262626;letter-spacing:-0.284px;">055213</span>
<span class="t" style="left:330px;top:818px;font-size:23.5px;line-height:23.5px;color:#262626;letter-spacing:-0.129px;max-width:261px;overflow:hidden;">Pipe and Tube Railings</span>
<span class="t" style="left:606px;top:818px;font-size:23.5px;line-height:23.5px;color:#262626;">1</span>
<span class="t" style="left:759px;top:818px;font-size:23.5px;line-height:23.5px;color:#262626;">0</span>
<span class="t" style="left:923px;top:825px;font-size:23px;line-height:23px;color:#fff;font-weight:bold;text-shadow:1px 2px 1px rgba(0,60,0,.35);">1</span>
<span class="t" style="left:143px;top:879px;font-size:23.5px;line-height:23.5px;color:#262626;letter-spacing:-0.284px;">060000</span>
<span class="t" style="left:330px;top:879px;font-size:23.5px;line-height:23.5px;color:#262626;letter-spacing:-0.181px;max-width:261px;overflow:hidden;">Wood, Plastics, and</span>
<span class="t" style="left:606px;top:879px;font-size:23.5px;line-height:23.5px;color:#262626;">1</span>
<span class="t" style="left:759px;top:879px;font-size:23.5px;line-height:23.5px;color:#262626;">1</span>
<span class="t" style="left:923px;top:886px;font-size:23px;line-height:23px;color:#fff;font-weight:bold;text-shadow:1px 2px 1px rgba(0,60,0,.35);">1</span>
<span class="t" style="left:143px;top:939px;font-size:23.5px;line-height:23.5px;color:#262626;letter-spacing:-0.284px;">060500</span>
<span class="t" style="left:330px;top:939px;font-size:23.5px;line-height:23.5px;color:#262626;letter-spacing:-0.231px;max-width:261px;overflow:hidden;">Common Work Results</span>
<span class="t" style="left:606px;top:939px;font-size:23.5px;line-height:23.5px;color:#262626;">1</span>
<span class="t" style="left:759px;top:939px;font-size:23.5px;line-height:23.5px;color:#262626;">1</span>
<span class="t" style="left:923px;top:946px;font-size:23px;line-height:23px;color:#fff;font-weight:bold;text-shadow:1px 2px 1px rgba(0,60,0,.35);">1</span>
<span class="t" style="left:143px;top:999px;font-size:23.5px;line-height:23.5px;color:#262626;letter-spacing:-0.284px;">061000</span>
<span class="t" style="left:330px;top:999px;font-size:23.5px;line-height:23.5px;color:#262626;letter-spacing:-0.141px;max-width:261px;overflow:hidden;">Rough Carpentry</span>
<span class="t" style="left:606px;top:999px;font-size:23.5px;line-height:23.5px;color:#262626;">1</span>
<span class="t" style="left:759px;top:999px;font-size:23.5px;line-height:23.5px;color:#262626;">0</span>
<span class="t" style="left:923px;top:1006px;font-size:23px;line-height:23px;color:#fff;font-weight:bold;text-shadow:1px 2px 1px rgba(0,60,0,.35);">1</span>
<span class="t" style="left:143px;top:1060px;font-size:23.5px;line-height:23.5px;color:#262626;letter-spacing:-0.284px;">061600</span>
<span class="t" style="left:330px;top:1060px;font-size:23.5px;line-height:23.5px;color:#262626;letter-spacing:-0.105px;max-width:261px;overflow:hidden;">Sheathing</span>
<span class="t" style="left:606px;top:1060px;font-size:23.5px;line-height:23.5px;color:#262626;">0</span>
<span class="t" style="left:759px;top:1060px;font-size:23.5px;line-height:23.5px;color:#262626;">0</span>
<span class="t" style="right:309px;top:1060px;font-size:23.5px;line-height:23.5px;color:#262626;font-style:italic;letter-spacing:0.253px;">None invited for trade</span>
<span class="t" style="left:143px;top:1106px;font-size:23.5px;line-height:23.5px;color:#262626;letter-spacing:-0.284px;">061713</span>
<span class="t" style="left:330px;top:1106px;font-size:23.5px;line-height:23.5px;color:#262626;letter-spacing:0.017px;max-width:261px;overflow:hidden;">Laminated Veneer Lumbe</span>
<span class="t" style="left:606px;top:1106px;font-size:23.5px;line-height:23.5px;color:#262626;">0</span>
<span class="t" style="left:759px;top:1106px;font-size:23.5px;line-height:23.5px;color:#262626;">0</span>
<span class="t" style="right:309px;top:1106px;font-size:23.5px;line-height:23.5px;color:#262626;font-style:italic;letter-spacing:0.253px;">None invited for trade</span>
<span class="t" style="left:143px;top:1151px;font-size:23.5px;line-height:23.5px;color:#262626;letter-spacing:-0.284px;">062000</span>
<span class="t" style="left:330px;top:1151px;font-size:23.5px;line-height:23.5px;color:#262626;letter-spacing:0.040px;max-width:261px;overflow:hidden;">Finish Carpentry</span>
<span class="t" style="left:606px;top:1151px;font-size:23.5px;line-height:23.5px;color:#262626;">0</span>
<span class="t" style="left:759px;top:1151px;font-size:23.5px;line-height:23.5px;color:#262626;">0</span>
<span class="t" style="right:309px;top:1151px;font-size:23.5px;line-height:23.5px;color:#262626;font-style:italic;letter-spacing:0.253px;">None invited for trade</span>
<span class="t" style="left:143px;top:1196px;font-size:23.5px;line-height:23.5px;color:#262626;letter-spacing:-0.284px;">070150</span>
<span class="t" style="left:330px;top:1196px;font-size:23.5px;line-height:23.5px;color:#262626;letter-spacing:-0.071px;max-width:261px;overflow:hidden;">Maintenance of Membran</span>
<span class="t" style="left:606px;top:1196px;font-size:23.5px;line-height:23.5px;color:#262626;">2</span>
<span class="t" style="left:759px;top:1196px;font-size:23.5px;line-height:23.5px;color:#262626;">1</span>
<span class="t" style="left:923px;top:1203px;font-size:23px;line-height:23px;color:#fff;font-weight:bold;text-shadow:1px 2px 1px rgba(0,60,0,.35);">1</span>
<span class="t" style="left:1407px;top:1203px;font-size:23px;line-height:23px;color:#fff;font-weight:bold;text-shadow:1px 2px 1px rgba(0,60,0,.35);">1</span>
<span class="t" style="left:143px;top:1256px;font-size:23.5px;line-height:23.5px;color:#262626;letter-spacing:-0.284px;">075000</span>
<span class="t" style="left:330px;top:1256px;font-size:23.5px;line-height:23.5px;color:#262626;letter-spacing:-0.191px;max-width:261px;overflow:hidden;">Membrane Roofing</span>
<span class="t" style="left:606px;top:1256px;font-size:23.5px;line-height:23.5px;color:#262626;">1</span>
<span class="t" style="left:759px;top:1256px;font-size:23.5px;line-height:23.5px;color:#262626;">0</span>
<span class="t" style="left:923px;top:1263px;font-size:23px;line-height:23px;color:#fff;font-weight:bold;text-shadow:1px 2px 1px rgba(0,60,0,.35);">1</span>
<span class="t" style="left:143px;top:1317px;font-size:23.5px;line-height:23.5px;color:#262626;letter-spacing:-0.284px;">079000</span>
<span class="t" style="left:330px;top:1317px;font-size:23.5px;line-height:23.5px;color:#262626;letter-spacing:0.201px;max-width:261px;overflow:hidden;">Joint Protection</span>
<span class="t" style="left:606px;top:1317px;font-size:23.5px;line-height:23.5px;color:#262626;">1</span>
<span class="t" style="left:759px;top:1317px;font-size:23.5px;line-height:23.5px;color:#262626;">0</span>
<span class="t" style="left:923px;top:1324px;font-size:23px;line-height:23px;color:#fff;font-weight:bold;text-shadow:1px 2px 1px rgba(0,60,0,.35);">1</span>
<span class="t" style="left:143px;top:1377px;font-size:23.5px;line-height:23.5px;color:#262626;letter-spacing:-0.284px;">079200</span>
<span class="t" style="left:330px;top:1377px;font-size:23.5px;line-height:23.5px;color:#262626;letter-spacing:0.106px;max-width:261px;overflow:hidden;">Joint Sealants</span>
<span class="t" style="left:606px;top:1377px;font-size:23.5px;line-height:23.5px;color:#262626;">1</span>
<span class="t" style="left:759px;top:1377px;font-size:23.5px;line-height:23.5px;color:#262626;">0</span>
<span class="t" style="left:923px;top:1384px;font-size:23px;line-height:23px;color:#fff;font-weight:bold;text-shadow:1px 2px 1px rgba(0,60,0,.35);">1</span>
<span class="t" style="left:143px;top:1437px;font-size:23.5px;line-height:23.5px;color:#262626;letter-spacing:-0.284px;">081000</span>
<span class="t" style="left:330px;top:1437px;font-size:23.5px;line-height:23.5px;color:#262626;letter-spacing:-0.307px;max-width:261px;overflow:hidden;">Doors and Frames</span>
<span class="t" style="left:606px;top:1437px;font-size:23.5px;line-height:23.5px;color:#262626;">0</span>
<span class="t" style="left:759px;top:1437px;font-size:23.5px;line-height:23.5px;color:#262626;">0</span>
<span class="t" style="right:309px;top:1437px;font-size:23.5px;line-height:23.5px;color:#262626;font-style:italic;letter-spacing:0.253px;">None invited for trade</span>
<span class="t" style="left:143px;top:1483px;font-size:23.5px;line-height:23.5px;color:#262626;letter-spacing:0.412px;">081113</span>
<span class="t" style="left:330px;top:1483px;font-size:23.5px;line-height:23.5px;color:#262626;letter-spacing:-0.081px;max-width:261px;overflow:hidden;">Hollow Metal Doors and F</span>
<span class="t" style="left:606px;top:1483px;font-size:23.5px;line-height:23.5px;color:#262626;">0</span>
<span class="t" style="left:759px;top:1483px;font-size:23.5px;line-height:23.5px;color:#262626;">0</span>
<span class="t" style="right:309px;top:1483px;font-size:23.5px;line-height:23.5px;color:#262626;font-style:italic;letter-spacing:0.253px;">None invited for trade</span>

</div></div></div>
</body></html>
